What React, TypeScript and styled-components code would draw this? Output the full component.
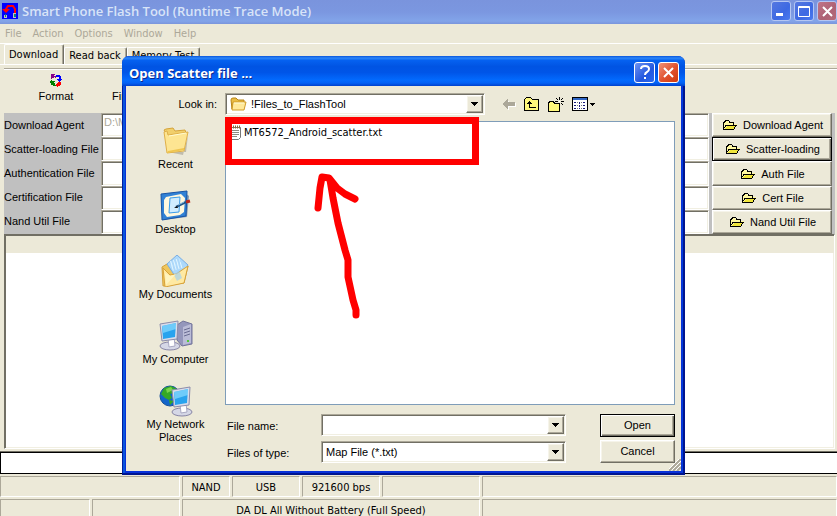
import React from "react";
import styled, { createGlobalStyle, css } from "styled-components";

const face = "#ece9d8";
const shadow = "#aca899";
const dark = "#716f64";

const GlobalStyle = createGlobalStyle`
  * { box-sizing: border-box; }
  html, body, #root { margin: 0; height: 100%; }
  body {
    overflow: hidden;
    background: ${face};
    color: #000;
    font: 11px/13px "Liberation Sans", Arial, sans-serif;
  }
  button, input, select { font: inherit; color: inherit; border-radius: 0; margin: 0; }
`;

const tahoma = css`font-family: "DejaVu Sans Condensed", "DejaVu Sans", sans-serif;`;
const sunken = css`
  border: 1px solid;
  border-color: ${shadow} #fff #fff ${shadow};
  box-shadow: inset 1px 1px ${dark}, inset -1px -1px #f1efe2;
`;
const raised = css`
  border: 1px solid;
  border-color: #fff ${dark} ${dark} #fff;
  box-shadow: inset -1px -1px ${shadow}, inset 1px 1px #f6f4ea;
`;

const AppWindow = styled.div`
  position: relative;
  display: flex;
  flex-direction: column;
  height: 100vh;
  overflow: hidden;
`;

const TitleBar = styled.header`
  display: flex;
  align-items: center;
  flex: none;
  height: 24px;
  padding: 0 0 2px 2px;
  gap: 4px;
  color: #d8e4f8;
  background: linear-gradient(#7a94dd, #7b97e0 50%, #82a4e9 88%, #7a95dc);
`;

const TitleText = styled.h1<{ $active?: boolean }>`
  flex: 1;
  margin: 0;
  font: 600 13px/20px "Open Sans", "Noto Sans", sans-serif;
  white-space: nowrap;
  ${(p) => p.$active && css`color: #fff; font-weight: 700; text-shadow: 1px 1px #0f2a8c;`}
`;

const Captions = styled.div`
  display: flex;
  gap: 3px;
`;

const CaptionButton = styled.button<{ $tone: "dim" | "dimClose" | "help" | "close" }>`
  display: grid;
  place-items: center;
  width: ${(p) => (p.$tone.startsWith("dim") ? 20 : 21)}px;
  height: ${(p) => (p.$tone.startsWith("dim") ? 20 : 21)}px;
  padding: 0;
  border: 1px solid ${(p) => (p.$tone.startsWith("dim") ? "#b4c6f3" : "#fff")};
  border-radius: 3px;
  background: ${(p) =>
    ({
      dim: "linear-gradient(135deg, #5577e0, #3d69e3 60%, #4b7bf0)",
      dimClose: "linear-gradient(135deg, #c07487, #ad6275 60%, #b56a78)",
      help: "linear-gradient(135deg, #6e93f3, #2458df 60%, #2a68ef)",
      close: "linear-gradient(135deg, #f09278, #e0502c 55%, #d03a0c)",
    })[p.$tone]};
`;

const MenuBar = styled.nav`
  display: flex;
  flex: none;
  gap: 11px;
  height: 20px;
  padding: 3px 5px;
  border-bottom: 1px solid #fff;
  color: ${shadow};
  ${tahoma}
`;

const MenuItem = styled.button`
  padding: 0;
  border: 0;
  background: none;
  line-height: 13px;
`;

const Tabs = styled.div`
  display: flex;
  flex: none;
  align-items: flex-end;
  height: 21px;
  padding: 1px 4px 0;
  border-bottom: 1px solid #fff;
  ${tahoma}
`;

const Tab = styled.button<{ $active?: boolean }>`
  height: ${(p) => (p.$active ? 20 : 17)}px;
  padding: 0 5px 1px 4px;
  border: 1px solid;
  border-color: #fff ${dark} transparent #fff;
  border-bottom: 0;
  border-radius: 2px 2px 0 0;
  box-shadow: inset -1px 0 ${shadow};
  background: ${face};
  white-space: nowrap;
`;

const ToolBar = styled.div`
  display: flex;
  flex: none;
  height: 45px;
  margin: 3px 0 0 4px;
  padding: 5px 16px;
  gap: 7px;
  border-top: 1px solid ${shadow};
  box-shadow: inset 0 1px #fff;
`;

const ToolButton = styled.button`
  display: flex;
  flex-direction: column;
  align-items: center;
  gap: 3px;
  width: 72px;
  padding: 0;
  border: 0;
  background: none;
`;

const FileForm = styled.form`
  display: flex;
  flex: none;
  height: 121px;
  margin: 0 2px 0 4px;
  background: #c0c0c0;
`;

const Labels = styled.div`
  display: flex;
  flex-direction: column;
  width: 97px;
`;

const FieldLabel = styled.label`
  line-height: 24px;
  white-space: nowrap;
`;

const Fields = styled.div`
  display: flex;
  flex: 1;
  flex-direction: column;
`;

const PathInput = styled.input`
  flex: 1;
  min-height: 0;
  width: 100%;
  padding: 0 2px 6px;
  background: #fff;
  ${sunken}
  &:disabled { color: ${shadow}; }
`;

const LoadButtons = styled.div`
  display: flex;
  flex-direction: column;
  width: 126px;
  padding: 0 3px;
`;

const LoadButton = styled.button<{ $focus?: boolean }>`
  display: flex;
  flex: 1;
  align-items: center;
  justify-content: center;
  gap: 5px;
  padding: 1px 0 0 2px;
  background: ${face};
  white-space: nowrap;
  ${raised}
  ${(p) => p.$focus && css`outline: 1px solid #000; outline-offset: -1px;border-color: #000; box-shadow: inset 1px 1px #fff, inset -1px -1px ${dark}, inset -2px -2px ${shadow};`}
`;

const ResultList = styled.section`
  flex: 1;
  margin: 0 2px 3px 4px;
  background: #fff;
  ${sunken}
  border-color: ${dark} #fff #fff ${dark};
`;

const ResultHeader = styled.div`
  height: 17px;
  margin: 1px 0 0 1px;
  background: ${face};
`;

const ProgressTrack = styled.div`
  flex: none;
  height: 22px;
  background: #fff;
  border: 1px solid #000;
  border-right: 0;
  box-shadow: 0 -1px ${dark};
`;

const StatusRow = styled.div<{ $cut?: boolean }>`
  display: flex;
  flex: none;
  gap: 2px;
  height: ${(p) => (p.$cut ? 24 : 21)}px;
  margin-top: 2px;
  margin-bottom: ${(p) => (p.$cut ? -7 : 0)}px;
`;

const StatusCell = styled.div<{ $width?: number }>`
  flex: ${(p) => (p.$width ? `0 0 ${p.$width}px` : "1 1 0")};
  border: 1px solid;
  border-color: ${shadow} #fff #fff ${shadow};
  text-align: center;
  line-height: 21px;
  white-space: nowrap;
  ${tahoma}
`;

const Dialog = styled.div`
  position: absolute;
  top: 56px;
  right: 152px;
  left: 122px;
  display: flex;
  flex-direction: column;
  padding: 0 4px 4px;
  border-radius: 7px 7px 0 0;
  background: linear-gradient(90deg, #001ea0 1px, #0855dd 1px 3px, #0831d9 3px, #0831d9 calc(100% - 3px), #003bda calc(100% - 3px) calc(100% - 2px), #001590 calc(100% - 2px));
  box-shadow: inset 0 -2px #001590;
`;

const DialogTitle = styled.header`
  display: flex;
  align-items: center;
  height: 30px;
  margin: 0 -4px;
  padding: 3px 6px 0 7px;
  border-radius: 7px 7px 0 0;
  background: linear-gradient(#0855dd, #2c86f8 7%, #0561f0 15%, #0054e3 35%, #0055e8 55%, #026afe 80%, #0361f5 90%, #0041cc);
`;

const DialogBody = styled.div`
  display: grid;
  grid-template-columns: 99px 1fr;
  grid-template-rows: 35px 1fr;
  position: relative;
  height: 385px;
  background: ${face};
`;

const LookRow = styled.div`
  display: flex;
  grid-column: 1 / -1;
  align-items: center;
  padding: 1px 0 0;
`;

const LookLabel = styled.label`
  width: 99px;
  padding-right: 8px;
  text-align: right;
`;

const Combo = styled.div`
  display: flex;
  flex: 1;
  align-items: center;
  height: 22px;
  padding: 2px 3px;
  background: #fff;
  ${sunken}
`;

const FolderCombo = styled(Combo)`
  gap: 3px;
  padding-left: 4px;
`;

const ComboSelect = styled.select`
  appearance: none;
  grid-area: 1 / 1;
  width: 100%;
  height: 16px;
  padding: 0 18px 0 1px;
  border: 0;
  outline: 0;
  background: transparent;
`;

const ComboInput = styled.input`
  flex: 1;
  min-width: 0;
  height: 16px;
  padding: 0 1px;
  border: 0;
  outline: 0;
  background: transparent;
`;

const SelectStack = styled.div`
  display: grid;
  flex: 1;
  align-items: center;
`;

const arrowBox = css`
  display: grid;
  place-items: center;
  width: 17px;
  height: 18px;
  padding: 0;
  margin-right: -2px;
  background: ${face};
  ${raised}
`;

const ArrowFace = styled.span`
  ${arrowBox}
  grid-area: 1 / 1;
  justify-self: end;
  pointer-events: none;
`;

const ArrowButton = styled.button`${arrowBox}`;

const NavTools = styled.div`
  display: flex;
  flex: none;
  align-items: center;
  gap: 8px;
  width: 196px;
  padding-left: 18px;
`;

const IconButton = styled.button`
  display: flex;
  padding: 0;
  border: 0;
  background: none;
`;

const Places = styled.nav`
  display: flex;
  flex-direction: column;
  gap: 3px;
  padding-top: 4px;
`;

const Place = styled.button`
  display: flex;
  flex-direction: column;
  align-items: center;
  height: 62px;
  padding: 0;
  gap: 1px;
  border: 0;
  background: none;
  line-height: 13px;
`;

const PlaceName = styled.span`
  max-width: 76px;
`;

const Browser = styled.div`
  display: flex;
  flex-direction: column;
  padding-right: 6px;
`;

const FileList = styled.div`
  height: 284px;
  padding: 3px 3px;
  border: 1px solid #7f9db9;
  background: #fff;
`;

const FileItem = styled.button`
  display: flex;
  align-items: center;
  gap: 1px;
  padding: 0;
  border: 0;
  background: none;
  ${tahoma}
`;

const Footer = styled.div`
  display: flex;
  gap: 34px;
  padding-top: 9px;
`;

const FooterFields = styled.div`
  display: flex;
  flex: 1;
  flex-direction: column;
  gap: 5px;
`;

const FooterField = styled.div`
  display: flex;
  align-items: center;
`;

const FooterLabel = styled.label`
  width: 96px;
  padding: 2px 0 0 2px;
`;

const Actions = styled.div`
  display: flex;
  flex-direction: column;
  gap: 3px;
  width: 75px;
`;

const ActionButton = styled.button<{ $default?: boolean }>`
  height: 23px;
  padding: 0;
  background: ${face};
  ${raised}
  ${(p) => p.$default && css`border-color: #000; box-shadow: inset 1px 1px #fff, inset -1px -1px ${dark}, inset -2px -2px ${shadow};`}
`;

const Grip = styled.svg`
  position: absolute;
  right: 0;
  bottom: 0;
`;

const MarkBox = styled.div`
  position: absolute;
  top: 117px;
  left: 225px;
  width: 254px;
  height: 48px;
  border: 7px solid #f00;
  border-bottom-width: 6px;
  pointer-events: none;
`;

const MarkArrow = styled.svg`
  position: absolute;
  top: 170px;
  left: 310px;
  pointer-events: none;
`;

const AppIcon = () => (
  <svg width="16" height="18" viewBox="0 0 16 18" aria-hidden="true">
    <path fill="#00f" d="M0 1h16v16H0z" />
    <path fill="none" stroke="#f00" strokeWidth="2" d="M4 9V7l2-3h5l2 3v4" />
    <path fill="#f00" d="M0 7h8l-4 4z" />
    <path fill="#c0c0c0" d="M2 13h3v3H2zM11 11h3v5h-3z" />
    <path fill="#0a8080" d="M3 12h1v3H3zM12 12h2v3h-2z" />
  </svg>
);

const FormatIcon = () => (
  <svg width="12" height="13" viewBox="0 0 12 13" shapeRendering="crispEdges" aria-hidden="true">
    <path fill="#808" d="M1 0h4v1H4v1h2v2H5V3H4v1H2v1H1z" />
    <path fill="#00f" d="M6 1h4v1h1v3h1v1h-1v1h-1v1H9V7H8V6H7V5h2V3H6z" />
    <path fill="#008000" d="M0 7h1V6h1v1h3v1H4v1h1v2h1v1H3v-1H1V9H0z" />
    <path fill="#f00" d="M8 8h3v3h-1v1H8v1H7v-1H6v-2h1V9h1z" />
  </svg>
);

const OpenFolder = () => (
  <svg width="15" height="11" viewBox="0 0 15 11" shapeRendering="crispEdges" aria-hidden="true">
    <path fill="#fff8a0" d="M1 2h1V1h3v1h5v2h4v1L11 9H1z" />
    <path fill="#f0e63c" d="M5 5h9l-3 4H2z" />
    <path fill="none" stroke="#000" d="M.5 9.5v-7h1v-1h1v-1h3l1 1v1h4v2M.5 9.5h10l3-4.5M.5 8.5l3-3.5H14" />
  </svg>
);

const DownArrow = () => (
  <svg width="7" height="4" viewBox="0 0 7 4" shapeRendering="crispEdges" aria-hidden="true">
    <path d="M0 0h7v1H6v1H5v1H4v1H3V3H2V2H1V1H0z" />
  </svg>
);

const SmallFolder = () => (
  <svg width="17" height="14" viewBox="0 0 17 14" aria-hidden="true">
    <path fill="#e9bd45" stroke="#b98618" d="M1 3Q1 1 3 1h3l2 2h6v3H3L2 12z" />
    <path fill="#ffe99a" stroke="#d09b28" d="M3 5h13l-2 8H2z" />
    <path stroke="#fffbd8" d="M4 6h10" />
  </svg>
);

const BackIcon = () => (
  <svg width="13" height="11" viewBox="0 0 13 11" shapeRendering="crispEdges" aria-hidden="true">
    <path fill="#fff" d="M6 1v3h7v4H6v3H5L2 7z" />
    <path fill={shadow} d="M5 0v3h7v4H5v3H4V9H3V8H2V7H1V6H0V4h1V3h1V2h1V1h1V0z" />
  </svg>
);

const UpIcon = () => (
  <svg width="16" height="14" viewBox="0 0 16 14" shapeRendering="crispEdges" aria-hidden="true">
    <path fill="#fff87c" stroke="#000" d="M.5 13.5v-11l2-2h4l2 2h6v11z" />
    <path d="M5 4h1v1h1v1h1v1H6v3h6v1H5V7H3V6h1V5h1z" />
  </svg>
);

const NewFolderIcon = () => (
  <svg width="16" height="15" viewBox="0 0 16 15" shapeRendering="crispEdges" aria-hidden="true">
    <path fill="#fff87c" stroke="#000" d="M.5 14.5v-8l1-2h4l1 2h5v8z" />
    <path d="M11 0h1v3h-1zM11 6h1v3h-1zM7 4h3v1H7zM13 4h3v1h-3zM8 1h1v1H8zM9 2h1v1H9zM14 1h1v1h-1zM13 2h1v1h-1zM13 6h1v1h-1zM14 7h1v1h-1z" />
    <path fill="#fff" d="M11 4h1v1h-1z" />
  </svg>
);

const ViewIcon = () => (
  <svg width="23" height="14" viewBox="0 0 23 14" shapeRendering="crispEdges" aria-hidden="true">
    <path fill="#fff" stroke="#000" d="M.5 .5h15v13H.5z" />
    <path fill="#3167c6" d="M1 1h14v2H1z" />
    <path fill="#18187c" d="M2 5h2v1H2zM2 8h2v1H2zM2 11h2v1H2zM7 5h1v2H7zM7 8h1v2H7zM7 11h1v1H7zM11 5h2v1h-2zM11 8h2v1h-2zM11 11h2v1h-2z" />
    <path fill="#777" d="M5 5h1v1H5zM5 8h1v1H5zM5 11h1v1H5zM9 5h1v1H9zM9 8h1v1H9zM9 11h1v1H9z" />
    <path d="M18 6h5v1h-1v1h-1v1h-1V8h-1V7h-1z" />
  </svg>
);

const NoteIcon = () => (
  <svg width="14" height="15" viewBox="0 0 14 15" aria-hidden="true">
    <path fill="#fff" stroke="#777" d="M1.500 2.500h10v10l-2 2h-8z" />
    <path stroke="#8a8a80" d="M3 5.500h7M3 7.500h7M3 9.500h7M3 11.500h5" />
    <path stroke="#8d6b36" strokeDasharray="1 1" strokeWidth="3" d="M2 2h9" />
  </svg>
);

const RecentIcon = () => (
  <svg width="32" height="32" viewBox="0 0 32 32" aria-hidden="true">
    <path fill="#a49f90" d="m8 27 15 3 5-20-2 17z" opacity=".6" />
    <path fill="#f1cf6b" stroke="#d5a43a" d="m4 5 2-1 7-1 2 3 10-1 1 3-18 4z" />
    <path fill="#fde592" stroke="#dfb049" d="m4 7 3-1 1 4 20-3-4 19-17 2z" />
    <path fill="none" stroke="#fffbd1" d="m9 11 17-3" />
    <path fill="#efc54f" d="m8 26 16-3v2L7 28z" />
  </svg>
);

const DesktopIcon = () => (
  <svg width="32" height="32" viewBox="0 0 32 32" aria-hidden="true">
    <path fill="#124b92" d="m3 30 24-3 2-21-4-3L1 6z" opacity=".5" />
    <path fill="#3181d5" stroke="#1854a5" d="m1 4 26-3-1 25-24 4z" />
    <path fill="#fff8df" d="m6 7 15-3 4 4-1 14-4 3-13 2-3-4V10z" />
    <path fill="#d1edff" stroke="#3a9be9" d="m10 8 10-1-1 15-10 1z" />
    <path stroke="#225588" strokeWidth="2.500" d="m16 17 10-5" />
    <path stroke="#8ec3e6" d="m18 15 6-3" />
    <path stroke="#bd281b" strokeWidth="3" d="m26 12 4-1" />
    <path fill="#111" d="m14 18 3-2 1 2z" />
  </svg>
);

const DocumentsIcon = () => (
  <svg width="32" height="32" viewBox="0 0 32 32" aria-hidden="true">
    <path fill="#efc75e" stroke="#d4a13b" d="m2 12 5-3 5 3 14-3 2 2-4 17-21 3z" />
    <path fill="#acd8fa" stroke="#79aee4" d="m7 9 10-9 11 10-9 17z" />
    <path stroke="#e3f6ff" strokeDasharray="1 2" strokeWidth="6" d="m11 9 9-3m-8 7 10-3" />
    <path fill="#ffe9a2" stroke="#d8a23a" d="m3 13 7 7 6-1 12-8-4 17-19 4z" />
    <path fill="#9ccff5" d="m14 20 5-5 3 8-5 3z" opacity=".65" />
    <path fill="#fff4bf" d="m5 18 5 3 6-2-10 11z" />
  </svg>
);

const MonitorShape = () => (
  <g>
    <ellipse cx="11" cy="26" rx="10" ry="4" fill="#d5d7e6" stroke="#8785a5" />
    <path fill="#fff" stroke="#a8a8c2" d="m9 18 6-1 1 9-6 1z" />
    <path fill="#d9ddeb" stroke="#8c8caa" d="m1 4 18-3-1 18-15 2z" />
    <path fill="#28a3ee" d="m3 6 14-3-1 14-12 2z" />
    <path fill="#8bdcff" d="m3 6 14-3v6L4 13z" opacity=".7" />
  </g>
);

const ComputerIcon = () => (
  <svg width="34" height="32" viewBox="0 0 34 32" aria-hidden="true">
    <path fill="#9496bb" stroke="#73749a" d="m18 5 6-4 9 3v20l-10 2-5-6z" />
    <path fill="#bbbcd7" d="m24 7 8-3v19l-8 2z" />
    <path stroke="#696b91" d="m25 10 6-2m-6 5 6-2m-6 5 6-2" />
    <path fill="#50cc35" d="M28 20h2v2h-2z" />
    <MonitorShape />
  </svg>
);

const NetworkIcon = () => (
  <svg width="34" height="32" viewBox="0 0 34 32" aria-hidden="true">
    <circle cx="11" cy="11" r="10" fill="#1264c9" stroke="#185199" />
    <path fill="#35a827" d="m5 3 7-2 6 3-3 4-4 1 2 4-3 2-4-2-4-4z" />
    <path fill="#79d44b" d="m7 4 5-2 2 3-6 3z" />
    <path fill="#35a827" d="m10 15 5 1-4 4z" />
    <g transform="translate(12 1)"><MonitorShape /></g>
  </svg>
);

const Cross = () => (
  <svg width="13" height="13" viewBox="0 0 13 13" aria-hidden="true">
    <path fill="none" stroke="#fff" strokeWidth="2" d="m2 2 9 9m0-9-9 9" />
  </svg>
);

const fields = ["Download Agent", "Scatter-loading File", "Authentication File", "Certification File", "Nand Util File"];
const loaders = ["Download Agent", "Scatter-loading", "Auth File", "Cert File", "Nand Util File"];
const places = [
  { name: "Recent", Icon: RecentIcon },
  { name: "Desktop", Icon: DesktopIcon },
  { name: "My Documents", Icon: DocumentsIcon },
  { name: "My Computer", Icon: ComputerIcon },
  { name: "My Network Places", Icon: NetworkIcon },
];

const OpenDialog = () => (
  <Dialog role="dialog" aria-labelledby="dialog-title">
    <DialogTitle>
      <TitleText as="h2" id="dialog-title" $active>Open Scatter file ...</TitleText>
      <Captions>
        <CaptionButton $tone="help" aria-label="Help">
          <svg width="12" height="15" viewBox="0 0 12 15" aria-hidden="true">
            <path fill="none" stroke="#fff" strokeWidth="2" d="M2 4q0-3 4-3t4 3q0 2-2 3T6 10" />
            <path fill="#fff" d="M5 12h2v2H5z" />
          </svg>
        </CaptionButton>
        <CaptionButton $tone="close" aria-label="Close"><Cross /></CaptionButton>
      </Captions>
    </DialogTitle>
    <DialogBody>
      <LookRow>
        <LookLabel htmlFor="look-in">Look in:</LookLabel>
        <FolderCombo>
          <SmallFolder />
          <SelectStack>
            <ComboSelect id="look-in"><option>!Files_to_FlashTool</option></ComboSelect>
            <ArrowFace><DownArrow /></ArrowFace>
          </SelectStack>
        </FolderCombo>
        <NavTools>
          <IconButton aria-label="Back"><BackIcon /></IconButton>
          <IconButton aria-label="Up one level"><UpIcon /></IconButton>
          <IconButton aria-label="New folder"><NewFolderIcon /></IconButton>
          <IconButton aria-label="View"><ViewIcon /></IconButton>
        </NavTools>
      </LookRow>
      <Places>
        {places.map(({ name, Icon }) => (
          <Place key={name}><Icon /><PlaceName>{name}</PlaceName></Place>
        ))}
      </Places>
      <Browser>
        <FileList>
          <FileItem><NoteIcon />MT6572_Android_scatter.txt</FileItem>
        </FileList>
        <Footer>
          <FooterFields>
            <FooterField>
              <FooterLabel htmlFor="file-name">File name:</FooterLabel>
              <Combo>
                <ComboInput id="file-name" />
                <ArrowButton aria-label="Show recent names"><DownArrow /></ArrowButton>
              </Combo>
            </FooterField>
            <FooterField>
              <FooterLabel htmlFor="file-type">Files of type:</FooterLabel>
              <Combo>
                <SelectStack>
                  <ComboSelect id="file-type"><option>Map File (*.txt)</option></ComboSelect>
                  <ArrowFace><DownArrow /></ArrowFace>
                </SelectStack>
              </Combo>
            </FooterField>
          </FooterFields>
          <Actions>
            <ActionButton $default>Open</ActionButton>
            <ActionButton>Cancel</ActionButton>
          </Actions>
        </Footer>
      </Browser>
      <Grip width="12" height="12" viewBox="0 0 12 12" aria-hidden="true">
        <path stroke={shadow} strokeWidth="2" d="M0 12 12 0M4 12l8-8M8 12l4-4" />
        <path stroke="#fff" d="M-1 11 11-1M3 11l9-9M7 11l5-5" />
      </Grip>
    </DialogBody>
  </Dialog>
);

export default function App() {
  return (
    <AppWindow>
      <GlobalStyle />
      <TitleBar>
        <AppIcon />
        <TitleText>Smart Phone Flash Tool (Runtime Trace Mode)</TitleText>
        <Captions>
          <CaptionButton $tone="dim" aria-label="Minimize">
            <svg width="12" height="12" aria-hidden="true"><path fill="#fff" d="M1 8h7v3H1z" /></svg>
          </CaptionButton>
          <CaptionButton $tone="dim" aria-label="Maximize">
            <svg width="12" height="12" aria-hidden="true"><path fill="none" stroke="#fff" d="M.5 1.500h11v10H.5zM0 2.500h12" /></svg>
          </CaptionButton>
          <CaptionButton $tone="dimClose" aria-label="Close"><Cross /></CaptionButton>
        </Captions>
      </TitleBar>
      <MenuBar>
        {["File", "Action", "Options", "Window", "Help"].map((m) => (
          <MenuItem key={m} disabled>{m}</MenuItem>
        ))}
      </MenuBar>
      <Tabs role="tablist">
        <Tab role="tab" $active>Download</Tab>
        <Tab role="tab">Read back</Tab>
        <Tab role="tab">Memory Test</Tab>
      </Tabs>
      <ToolBar>
        <ToolButton><FormatIcon />Format</ToolButton>
        <ToolButton><FormatIcon />Firmware</ToolButton>
      </ToolBar>
      <FileForm>
        <Labels>
          {fields.map((f, i) => (
            <FieldLabel key={f} htmlFor={`path-${i}`}>{f}</FieldLabel>
          ))}
        </Labels>
        <Fields>
          {fields.map((f, i) => (
            <PathInput key={f} id={`path-${i}`} disabled={i === 0} defaultValue={i === 0 ? "D:\\MTK" : ""} />
          ))}
        </Fields>
        <LoadButtons>
          {loaders.map((l, i) => (
            <LoadButton key={l} type="button" $focus={i === 1}><OpenFolder />{l}</LoadButton>
          ))}
        </LoadButtons>
      </FileForm>
      <ResultList><ResultHeader /></ResultList>
      <ProgressTrack />
      <StatusRow>
        <StatusCell $width={180} />
        <StatusCell $width={48}>NAND</StatusCell>
        <StatusCell $width={68}>USB</StatusCell>
        <StatusCell $width={78}>921600 bps</StatusCell>
        <StatusCell $width={98} />
        <StatusCell />
      </StatusRow>
      <StatusRow $cut>
        <StatusCell $width={90} />
        <StatusCell $width={88} />
        <StatusCell $width={298}>DA DL All Without Battery (Full Speed)</StatusCell>
        <StatusCell />
      </StatusRow>
      <OpenDialog />
      <MarkBox />
      <MarkArrow width="56" height="152" viewBox="0 0 56 152" aria-hidden="true">
        <path
          fill="none"
          stroke="#f00"
          strokeWidth="7"
          strokeLinecap="round"
          strokeLinejoin="round"
          d="M8 38l2-20 2-11 7 1 8 10 8 6 10 5M20 10l3 18 5 25 7 27 3 10v17l5 23 3 10v5"
        />
      </MarkArrow>
    </AppWindow>
  );
}
